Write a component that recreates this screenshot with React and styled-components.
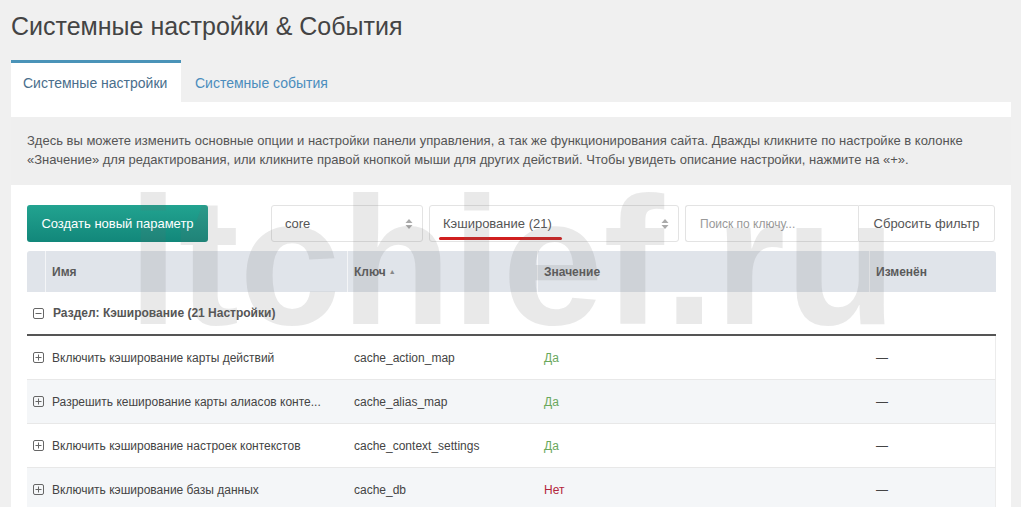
import React from 'react'
import styled, { createGlobalStyle } from 'styled-components'

const GlobalStyle = createGlobalStyle`
  html, body {
    margin: 0;
    padding: 0;
    background: #f0f0f0;
    font-family: "Liberation Sans", Arial, sans-serif;
    color: #555;
  }
`

const rows = [
  { name: 'Включить кэширование карты действий', key: 'cache_action_map', value: 'Да', on: true },
  { name: 'Разрешить кеширование карты алиасов конте...', key: 'cache_alias_map', value: 'Да', on: true },
  { name: 'Включить кэширование настроек контекстов', key: 'cache_context_settings', value: 'Да', on: true },
  { name: 'Включить кэширование базы данных', key: 'cache_db', value: 'Нет', on: false },
]

function BoxIcon({ open }) {
  return (
    <svg width="11" height="11" viewBox="0 0 11 11">
      <rect x="0.5" y="0.5" width="10" height="10" rx="1.5" fill="none" stroke="#666" />
      <line x1="2.5" y1="5.5" x2="8.5" y2="5.5" stroke="#666" />
      {!open && <line x1="5.5" y1="2.5" x2="5.5" y2="8.5" stroke="#666" />}
    </svg>
  )
}

function SelectArrows() {
  return (
    <svg width="8" height="12" viewBox="0 0 8 12">
      <path d="M4 1 L7.5 5 H0.5 Z" fill="#aaa" />
      <path d="M4 11 L7.5 7 H0.5 Z" fill="#aaa" />
    </svg>
  )
}

export default function App() {
  return (
    <Page>
      <GlobalStyle />
      <Title>Системные настройки &amp; События</Title>
      <Tabs>
        <Tab $active>Системные настройки</Tab>
        <Tab>Системные события</Tab>
      </Tabs>
      <Panel>
        <Description>
          Здесь вы можете изменить основные опции и настройки панели управления, а так же функционирования сайта. Дважды кликните по настройке в колонке
          «Значение» для редактирования, или кликните правой кнопкой мыши для других действий. Чтобы увидеть описание настройки, нажмите на «+».
        </Description>
        <Content>
          <Toolbar>
            <CreateButton>Создать новый параметр</CreateButton>
            <Select $width={152}>
              <span>core</span>
              <SelectArrows />
            </Select>
            <Select $width={250}>
              <Marked>Кэширование (21)</Marked>
              <SelectArrows />
            </Select>
            <Search>Поиск по ключу...</Search>
            <ResetButton>Сбросить фильтр</ResetButton>
          </Toolbar>
          <Table>
            <HeadRow>
              <HeadCell />
              <HeadCell>Имя</HeadCell>
              <HeadCell>
                Ключ <SortMark>▲</SortMark>
              </HeadCell>
              <HeadCell>Значение</HeadCell>
              <HeadCell>Изменён</HeadCell>
            </HeadRow>
            <GroupRow>
              <BoxIcon open />
              <span>Раздел: Кэширование (21 Настройки)</span>
            </GroupRow>
            {rows.map((row, i) => (
              <Row key={row.key} $striped={i % 2 === 1}>
                <Cell>
                  <BoxIcon />
                </Cell>
                <Cell>{row.name}</Cell>
                <Cell>{row.key}</Cell>
                <Value $on={row.on}>{row.value}</Value>
                <Cell>—</Cell>
              </Row>
            ))}
          </Table>
        </Content>
      </Panel>
      <Watermark>itchief.ru</Watermark>
    </Page>
  )
}

const Page = styled.div`
  position: relative;
  height: 507px;
  overflow: hidden;
  padding: 0 10px 0 11px;
`
const Title = styled.h1`
  margin: 0;
  padding-top: 11px;
  height: 60px;
  box-sizing: border-box;
  font-size: 25px;
  font-weight: normal;
  color: #444;
  line-height: 30px;
`
const Tabs = styled.div`
  display: flex;
  height: 42px;
`
const Tab = styled.div`
  display: flex;
  align-items: center;
  padding: 1px 12px 0 ${p => (p.$active ? '12px' : '14px')};
  width: ${p => (p.$active ? '146px' : 'auto')};
  box-sizing: content-box;
  font-size: 14px;
  color: ${p => (p.$active ? '#4a6e8c' : '#4b8dbd')};
  background: ${p => (p.$active ? '#fff' : 'transparent')};
  border-top: 3px solid ${p => (p.$active ? '#4a93b8' : 'transparent')};
`
const Panel = styled.div`
  background: #fff;
  padding-top: 15px;
  height: 405px;
`
const Description = styled.div`
  background: #efefef;
  padding: 14px 16px 16px;
  font-size: 13px;
  line-height: 19px;
  color: #555;
`
const Content = styled.div`
  padding: 20px 15px 0 16px;
`
const Toolbar = styled.div`
  display: flex;
  height: 37px;
  margin-bottom: 9px;
`
const CreateButton = styled.div`
  display: flex;
  align-items: center;
  justify-content: center;
  width: 181px;
  margin-right: 63px;
  border-radius: 3px;
  background: linear-gradient(#22a390, #12877a);
  color: #fff;
  font-size: 13px;
`
const Select = styled.div`
  display: flex;
  align-items: center;
  justify-content: space-between;
  width: ${p => p.$width}px;
  box-sizing: border-box;
  margin-right: 6px;
  padding: 0 9px 0 13px;
  border: 1px solid #e3e3e3;
  border-radius: 3px;
  font-size: 13px;
  color: #555;
`
const Marked = styled.span`
  position: relative;
  &::after {
    content: '';
    position: absolute;
    left: -4px;
    right: -10px;
    bottom: -9px;
    height: 3px;
    border-radius: 2px;
    background: #d01f1f;
  }
`
const Search = styled.div`
  display: flex;
  align-items: center;
  width: 173px;
  box-sizing: border-box;
  padding-left: 14px;
  border: 1px solid #e3e3e3;
  border-right: none;
  border-radius: 3px 0 0 3px;
  font-size: 12px;
  color: #999;
`
const ResetButton = styled.div`
  display: flex;
  align-items: center;
  justify-content: center;
  width: 137px;
  box-sizing: border-box;
  border: 1px solid #e3e3e3;
  border-radius: 0 3px 3px 0;
  font-size: 13px;
  color: #555;
`
const Table = styled.div`
  width: 969px;
  font-size: 12px;
  color: #444;
`
const columns = '19px 302px 190px 332px 126px'
const HeadRow = styled.div`
  display: grid;
  grid-template-columns: ${columns};
  height: 41px;
  background: #e0e4ea;
  border-radius: 3px 3px 0 0;
`
const HeadCell = styled.div`
  display: flex;
  align-items: center;
  padding-left: 6px;
  font-weight: bold;
  color: #5a5a5a;
  border-right: 1px solid #f4f5f7;
  &:last-child {
    border-right: none;
  }
`
const SortMark = styled.span`
  font-size: 7px;
  color: #888;
  margin-left: 3px;
`
const GroupRow = styled.div`
  display: flex;
  align-items: center;
  gap: 9px;
  height: 42px;
  padding-left: 6px;
  border-bottom: 2px solid #555;
  font-weight: bold;
  color: #555;
`
const Row = styled.div`
  display: grid;
  grid-template-columns: ${columns};
  height: 43px;
  background: ${p => (p.$striped ? '#f4f6f8' : '#fff')};
  border-bottom: 1px solid #e8e8e8;
  border-right: 1px solid #ececec;
`
const Cell = styled.div`
  display: flex;
  align-items: center;
  padding-left: 6px;
  white-space: nowrap;
  overflow: hidden;
  color: #444;
`
const Value = styled(Cell)`
  color: ${p => (p.$on ? '#6aa85c' : '#b3263c')};
`
const Watermark = styled.div`
  position: absolute;
  left: 128px;
  top: 170px;
  font-size: 182px;
  font-weight: bold;
  line-height: 1;
  color: rgba(110, 110, 110, 0.15);
  pointer-events: none;
  white-space: nowrap;
`
